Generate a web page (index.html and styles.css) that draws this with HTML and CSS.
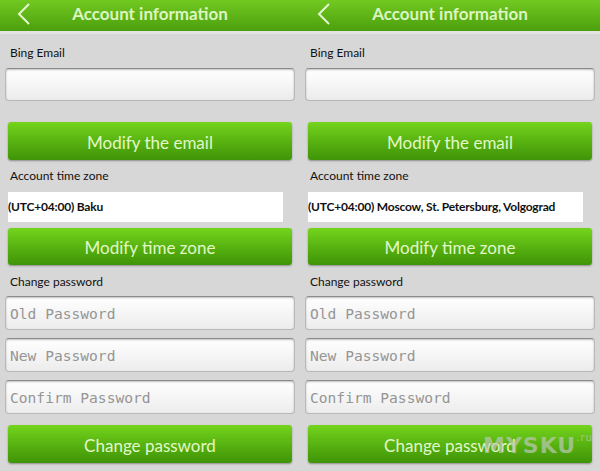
FILE: index.html
```html
<!DOCTYPE html>
<html lang="en">
<head>
    <meta charset="utf-8" />
    <meta name="viewport" content="width=device-width, initial-scale=1.0">
    <link rel="stylesheet" href="styles.css">
    <title>Account information</title>
</head>
<body>
    <div class="screens">
        <div class="panel">
            <div class="topbar">
                <svg class="back" width="14" height="22" viewBox="0 0 14 22"><path d="M12 1 L2 11 L12 21" fill="none" stroke="#e4f7cf" stroke-width="2"/></svg>
                <h1>Account information</h1>
            </div>
            <div class="label first">Bing Email</div>
            <input class="field" type="text">
            <button class="btn btn-email">Modify the email</button>
            <div class="label">Account time zone</div>
            <div class="zone">(UTC+04:00) Baku</div>
            <button class="btn btn-zone">Modify time zone</button>
            <div class="label pass">Change password</div>
            <input class="field pw" type="text" placeholder="Old Password">
            <input class="field pw" type="text" placeholder="New Password">
            <input class="field pw" type="text" placeholder="Confirm Password">
            <button class="btn btn-pass">Change password</button>
        </div>

        <div class="panel">
            <div class="topbar">
                <svg class="back" width="14" height="22" viewBox="0 0 14 22"><path d="M12 1 L2 11 L12 21" fill="none" stroke="#e4f7cf" stroke-width="2"/></svg>
                <h1>Account information</h1>
            </div>
            <div class="label first">Bing Email</div>
            <input class="field" type="text">
            <button class="btn btn-email">Modify the email</button>
            <div class="label">Account time zone</div>
            <div class="zone">(UTC+04:00) Moscow, St. Petersburg, Volgograd</div>
            <button class="btn btn-zone">Modify time zone</button>
            <div class="label pass">Change password</div>
            <input class="field pw" type="text" placeholder="Old Password">
            <input class="field pw" type="text" placeholder="New Password">
            <input class="field pw" type="text" placeholder="Confirm Password">
            <button class="btn btn-pass">Change password</button>
        </div>
        <div class="mark">MYSKU<span>.ru</span></div>
    </div>
</body>
</html>
```

FILE: styles.css
```css
body {
    margin: 0;
    background-color: #d7d7d7;
    font-family: 'Lato', sans-serif;
    color: #111;
}

.screens {
    position: relative;
    display: flex;
    width: 600px;
    height: 471px;
    overflow: hidden;
}

.panel {
    width: 300px;
    display: flex;
    flex-direction: column;
    align-items: flex-start;
}

.topbar {
    box-sizing: border-box;
    width: 300px;
    height: 34px;
    padding-bottom: 4px;
    background: linear-gradient(to bottom, #72c921, #4c9f0d);
    border-bottom: 3px solid #e3e3e3;
    display: flex;
    align-items: center;
    justify-content: center;
    position: relative;
}

.topbar h1 {
    margin: 0;
    font-size: 17px;
    font-weight: bold;
    color: #dcf6c2;
}

.back {
    position: absolute;
    left: 17px;
    top: 3px;
}

.label {
    font-size: 12px;
    line-height: 14px;
    margin: 9px 0 0 10px;
}

.label.first {
    margin-top: 12px;
}

.label.pass {
    margin-top: 10px;
}

.field {
    box-sizing: border-box;
    width: 290px;
    height: 33px;
    margin: 8px 0 0 5px;
    border: 1px solid #b8b8b8;
    border-top-color: #8a8a8a;
    border-radius: 4px;
    background: linear-gradient(to bottom, #ffffff, #ececec);
    box-shadow: inset 0 1px 2px rgba(0, 0, 0, 0.25);
    padding: 0 4px;
    font-size: 14.6px;
    font-family: 'DejaVu Sans Mono', monospace;
}

.field::placeholder {
    color: #959595;
}

.field.pw {
    height: 34px;
}

.label.pass + .field {
    margin-top: 7px;
}

.btn {
    box-sizing: border-box;
    width: 284px;
    height: 38px;
    margin: 21px 0 0 8px;
    padding: 2px 0 0;
    border: none;
    border-radius: 3px;
    background: linear-gradient(to bottom, #74d41c, #56b010 55%, #3f9407);
    box-shadow: 0 1px 2px rgba(0, 0, 0, 0.35);
    color: #e1f8c8;
    font-family: 'Lato', sans-serif;
    font-size: 17px;
}

.btn-zone {
    margin-top: 6px;
    height: 37px;
}

.btn-pass {
    margin-top: 11px;
}

.zone {
    box-sizing: border-box;
    width: 275px;
    height: 30px;
    margin: 9px 0 0 8px;
    background-color: white;
    font-size: 12px;
    font-weight: bold;
    letter-spacing: -0.2px;
    line-height: 30px;
    color: #111;
    white-space: nowrap;
}

.mark {
    position: absolute;
    left: 483px;
    top: 432px;
    font-family: 'DejaVu Sans', sans-serif;
    font-weight: bold;
    font-size: 22px;
    color: rgba(190, 200, 185, 0.7);
    letter-spacing: 1px;
}

.mark span {
    font-size: 10px;
    vertical-align: 12px;
    font-weight: normal;
}
```
